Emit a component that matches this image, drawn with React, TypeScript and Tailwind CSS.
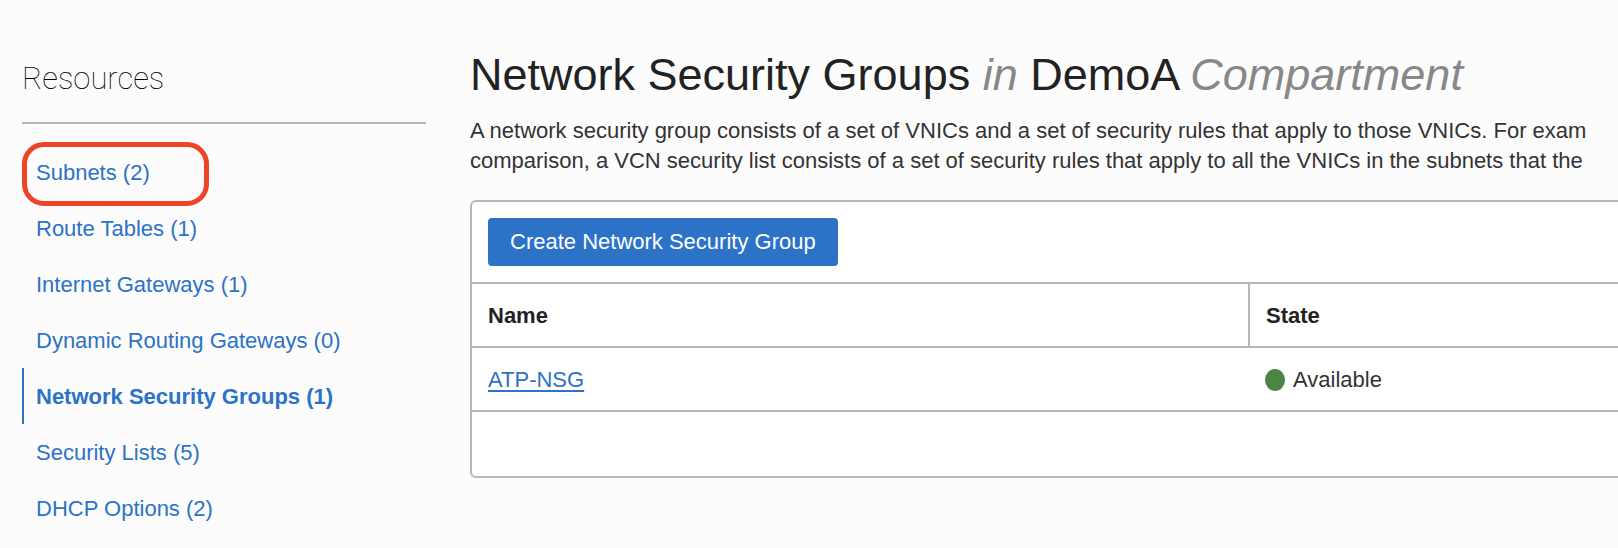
type Resource = { label: string; count: number; highlighted?: boolean; active?: boolean };

const resources: Resource[] = [
  { label: "Subnets", count: 2, highlighted: true },
  { label: "Route Tables", count: 1 },
  { label: "Internet Gateways", count: 1 },
  { label: "Dynamic Routing Gateways", count: 0 },
  { label: "Network Security Groups", count: 1, active: true },
  { label: "Security Lists", count: 5 },
  { label: "DHCP Options", count: 2 },
];

function Sidebar() {
  return (
    <aside className="w-[404px] shrink-0">
      <h2 className="border-b-2 border-[#b3b9c1] pt-14 pb-5 font-['Roboto',sans-serif] text-[31px] leading-[46px] font-thin text-black">
        Resources
      </h2>
      <nav aria-label="Resources" className="pt-5">
        <ul>
          {resources.map((item) => (
            <li key={item.label} className="relative">
              <a
                href="#"
                aria-current={item.active ? "page" : undefined}
                className={
                  item.active
                    ? "flex h-14 items-center border-l-2 border-[#2c72c7] pt-0.5 pl-3 font-bold"
                    : "flex h-14 items-center border-l-2 border-transparent pt-0.5 pl-3"
                }
              >
                {item.label} ({item.count})
              </a>
              {item.highlighted && (
                <span className="pointer-events-none absolute -top-0.5 left-0 h-16 w-[187px] rounded-[22px] border-5 border-[#ee4326]" />
              )}
            </li>
          ))}
        </ul>
      </nav>
    </aside>
  );
}

function GroupsPanel() {
  return (
    <section className="mt-6 rounded-l-md border-2 border-r-0 border-[#b3b9c1] bg-white">
      <div className="p-4">
        <button type="button" className="h-12 rounded bg-[#2c72c7] px-[22px] text-white">
          Create Network Security Group
        </button>
      </div>
      <table className="w-full table-fixed text-left">
        <thead>
          <tr className="h-16 border-y-2 border-[#b3b9c1] text-[#222222]">
            <th className="w-[777px] border-r-2 border-[#b3b9c1] px-4 pt-0.5 font-bold">Name</th>
            <th className="px-4 pt-0.5 font-bold">State</th>
          </tr>
        </thead>
        <tbody>
          <tr className="h-16 border-b-2 border-[#b3b9c1]">
            <td className="px-4 pt-0.5">
              <a href="#" className="text-[#2c72c7] underline decoration-2 underline-offset-3">
                ATP-NSG
              </a>
            </td>
            <td className="px-4 pt-0.5">
              <span className="flex items-center gap-2">
                <span className="h-[22px] w-5 rounded-[50%] bg-[#4c8443]" />
                Available
              </span>
            </td>
          </tr>
        </tbody>
      </table>
      <div className="h-16" />
    </section>
  );
}

export default function App() {
  return (
    <div className="flex min-h-screen gap-11 overflow-hidden bg-[#fcfcfc] pl-[22px] font-['Liberation_Sans',Arial,sans-serif] text-[22px] leading-[30px] text-[#333333]">
      <div className="text-[#2c72c7]">
        <Sidebar />
      </div>
      <main className="min-w-0 flex-1 overflow-hidden">
        <h1 className="pt-12 text-[45px] leading-[54px] whitespace-nowrap text-[#222222]">
          Network Security Groups <em className="text-[#888888]">in</em> DemoA{" "}
          <em className="text-[#888888]">Compartment</em>
        </h1>
        <p className="mt-3.5 whitespace-nowrap">
          A network security group consists of a set of VNICs and a set of security rules that apply to those VNICs. For exam
          <br />
          comparison, a VCN security list consists of a set of security rules that apply to all the VNICs in the subnets that the
        </p>
        <GroupsPanel />
      </main>
    </div>
  );
}
